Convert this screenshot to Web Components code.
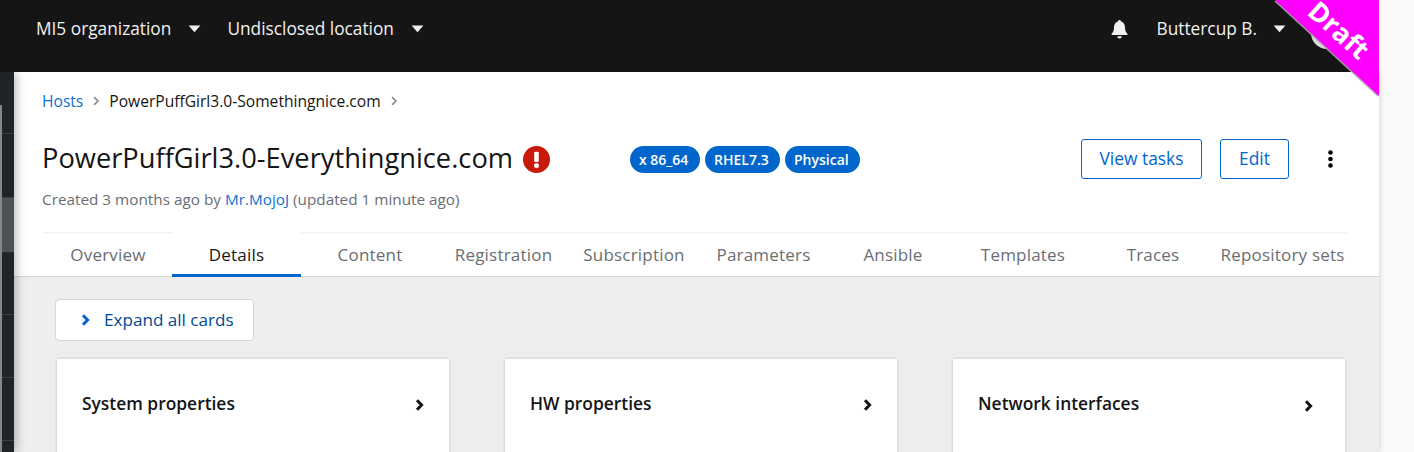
<!DOCTYPE html>
<html>
<head>
<meta charset="utf-8">
<style>
  html, body { margin: 0; height: 100%; overflow: hidden; }
  body { width: 1414px; height: 452px; background: #fafafa; font-family: "Open Sans", "Noto Sans", sans-serif; }
</style>
</head>
<body>
<app-shell>
  <top-bar slot="top"></top-bar>
  <side-rail slot="side"></side-rail>
  <host-page slot="main"></host-page>
</app-shell>
<draft-ribbon>Draft</draft-ribbon>

<script>
const caret = `<svg width="13" height="8" viewBox="0 0 13 8"><path d="M0.6 0.6h11.8L6.500 7.200z" fill="currentColor"/></svg>`;
const angle = `<svg width="8" height="12" viewBox="0 0 8 12"><path d="M1.600 1.200 6.400 6l-4.800 4.800" fill="none" stroke="currentColor" stroke-width="2.200"/></svg>`;
const angleBold = `<svg width="9" height="12" viewBox="0 0 9 12"><path d="M2 1.200 6.600 6 2 10.800" fill="none" stroke="currentColor" stroke-width="3"/></svg>`;

class AppShell extends HTMLElement {
    constructor() {
        super();
        this.attachShadow({mode: 'open'});
        this.shadowRoot.innerHTML = `
            <style>
                :host { display: grid; grid-template-columns: 14px 1365px; grid-template-rows: 72px 380px; width: 1414px; height: 452px; overflow: hidden; }
                ::slotted([slot=top]) { grid-column: 1 / 3; }
            </style>
            <slot name="top"></slot>
            <slot name="side"></slot>
            <slot name="main"></slot>
        `;
    }
}

class TopBar extends HTMLElement {
    constructor() {
        super();
        this.attachShadow({mode: 'open'});
        this.shadowRoot.innerHTML = `
            <style>
                :host { display: flex; align-items: flex-start; height: 72px; background: #151515; color: #f0f0f0; font-size: 17.300px; position: relative; z-index: 2; }
                .item { display: flex; align-items: center; height: 58px; }
                .item span { margin-right: 17px; position: relative; top: -1px; }
                .org { margin-left: 36px; margin-right: 26px; }
                .spacer { flex: 1; }
                .bell { margin-right: 29px; }
                .user span { margin-right: 16px; }
                .avatar { width: 32px; height: 32px; border-radius: 50%; background: #dcdcdc; margin: 17px 36px 0 25px; }
            </style>
            <div class="item org"><span>MI5 organization</span>${caret}</div>
            <div class="item"><span>Undisclosed location</span>${caret}</div>
            <div class="spacer"></div>
            <div class="item bell"><svg width="17" height="19" viewBox="0 0 17 19"><path fill="currentColor" d="M8.500 0a1.500 1.500 0 0 1 1.500 1.600c2.800.7 4 3 4 6 0 3.200.9 4.600 2.300 6 .4.500.2 1.400-.6 1.400H1.300c-.8 0-1-.9-.6-1.400 1.400-1.400 2.300-2.800 2.300-6 0-3 1.200-5.300 4-6A1.500 1.500 0 0 1 8.500 0zM6.200 16.200h4.600a2.300 2.300 0 0 1-4.600 0z"/></svg></div>
            <div class="item user"><span>Buttercup B.</span>${caret}</div>
            <div class="avatar"></div>
        `;
    }
}

class SideRail extends HTMLElement {
    constructor() {
        super();
        this.attachShadow({mode: 'open'});
        this.shadowRoot.innerHTML = `
            <style>
                :host { display: block; height: 380px; background: #212427; position: relative; z-index: 1; box-shadow: 3px 0 10px rgba(0,0,0,.25); }
                .row { box-sizing: border-box; border-bottom: 1px solid #3c3f42; }
                .row.on { background: #4f5255; border-bottom-color: #2b2e31; }
                .thumb { position: absolute; left: 0; top: 33px; bottom: 0; width: 2px; background: #85888b; }
            </style>
            <div class="row" style="height:62px"></div>
            <div class="row" style="height:64px"></div>
            <div class="row on" style="height:55px"></div>
            <div class="row" style="height:62px"></div>
            <div class="row" style="height:63px"></div>
            <div class="row" style="height:63px"></div>
            <div class="thumb"></div>
        `;
    }
}

class HostPage extends HTMLElement {
    constructor() {
        super();
        this.attachShadow({mode: 'open'});
        this.shadowRoot.innerHTML = `
            <style>
                :host { display: block; height: 380px; background: #fff; box-shadow: 0 0 6px rgba(0,0,0,.2); font-size: 16px; color: #151515; }
                .crumbs { display: flex; align-items: center; height: 20px; padding: 19px 0 1px 28px; font-size: 15.600px; }
                .crumbs a { color: #0f6fd0; }
                .crumbs svg { color: #8a8d90; margin: 0 9px; transform: scale(.8); }
                .head { display: flex; align-items: center; height: 42px; margin-top: 26px; padding-left: 28px; }
                h1 { margin: 0 0 3px; font-size: 27.250px; font-weight: 400; line-height: 39px; }
                .alert { flex: none; width: 27px; height: 27px; }
                .titlewrap { display: flex; align-items: center; width: 588px; flex: none; gap: 10px; }
                .badges { display: flex; gap: 5px; width: 451px; flex: none; }
                .actions { display: flex; align-items: center; }
                .kebab { margin-left: 39px; width: 5px; height: 18px; }
                .meta { margin: 9px 0 0 28px; font-size: 15.300px; line-height: 20px; color: #6a6e73; }
                .meta a { color: #0f6fd0; }
                detail-tabs { margin-top: 23px; }
                .body { background: #eeeeee; height: 175px; overflow: hidden; }
                .bar { padding: 22px 0 0 41px; height: 82px; box-sizing: border-box; }
                .cards { display: grid; grid-template-columns: repeat(3, 392px); gap: 56px; padding-left: 43px; }
            </style>
            <div class="crumbs"><a>Hosts</a>${angle}<span>PowerPuffGirl3.0-Somethingnice.com</span>${angle}</div>
            <div class="head">
                <div class="titlewrap">
                    <h1>PowerPuffGirl3.0-Everythingnice.com</h1>
                    <svg class="alert" viewBox="0 0 26 26"><circle cx="13" cy="13" r="13" fill="#c9190b"/><rect x="10.800" y="5.500" width="4.400" height="10" rx="1.200" fill="#fff"/><circle cx="13" cy="19" r="2.400" fill="#fff"/></svg>
                </div>
                <div class="badges">
                    <info-badge style="width:70px">x 86_64</info-badge>
                    <info-badge style="width:75px">RHEL7.3</info-badge>
                    <info-badge style="width:75px">Physical</info-badge>
                </div>
                <div class="actions">
                    <outline-button style="width:121px;margin-right:18px">View tasks</outline-button>
                    <outline-button style="width:69px">Edit</outline-button>
                    <svg class="kebab" viewBox="0 0 5 18"><circle cx="2.500" cy="2.500" r="2.300"/><circle cx="2.500" cy="9" r="2.300"/><circle cx="2.500" cy="15.500" r="2.300"/></svg>
                </div>
            </div>
            <div class="meta">Created 3 months ago by <a>Mr.MojoJ</a> (updated 1 minute ago)</div>
            <detail-tabs></detail-tabs>
            <div class="body">
                <div class="bar"><expand-button>Expand all cards</expand-button></div>
                <div class="cards">
                    <summary-card>System properties</summary-card>
                    <summary-card>HW properties</summary-card>
                    <summary-card style="--arrow-right:32px;--arrow-drop:6px">Network interfaces</summary-card>
                </div>
            </div>
        `;
    }
}

class InfoBadge extends HTMLElement {
    constructor() {
        super();
        this.attachShadow({mode: 'open'});
        this.shadowRoot.innerHTML = `
            <style>
                :host { display: inline-flex; align-items: center; box-sizing: border-box; height: 27px; padding-left: 9px; border-radius: 14px; background: #0066cc; color: #fff; font-size: 14px; font-weight: 600; white-space: nowrap; }
            </style>
            <slot></slot>
        `;
    }
}

class OutlineButton extends HTMLElement {
    constructor() {
        super();
        this.attachShadow({mode: 'open'});
        this.shadowRoot.innerHTML = `
            <style>
                :host { display: inline-flex; align-items: center; justify-content: center; height: 40px; box-sizing: border-box; padding-bottom: 2px; border: 1px solid #0066cc; border-radius: 3px; color: #0066cc; font-size: 17.400px; }
            </style>
            <slot></slot>
        `;
    }
}

class DetailTabs extends HTMLElement {
    constructor() {
        super();
        this.attachShadow({mode: 'open'});
        const tabs = [
            ['Overview', 128], ['Details', 129], ['Content', 138], ['Registration', 129],
            ['Subscription', 132], ['Parameters', 127], ['Ansible', 132], ['Templates', 128],
            ['Traces', 132], ['Repository sets', 127]
        ];
        this.shadowRoot.innerHTML = `
            <style>
                :host { display: block; box-sizing: content-box; border-bottom: 1px solid #d6d6d6; height: 44px; }
                .list { display: flex; height: 44px; margin-left: 30px; width: 1303px; box-sizing: border-box; border-top: 1px solid #f0f0f0; }
                .tab { box-sizing: border-box; height: 43px; display: flex; align-items: center; justify-content: center; color: #6a6e73; font-size: 17px; letter-spacing: .2px; flex: none; white-space: nowrap; }
                .tab.on { color: #151515; border-bottom: 3px solid #0066cc; background: #fff; margin-top: -1px; height: 45px; padding: 3px 0 0; }
            </style>
            <div class="list">
                ${tabs.map(([t, w]) => `<div class="tab${t === 'Details' ? ' on' : ''}" style="width:${w}px">${t}</div>`).join('')}
            </div>
        `;
    }
}

class ExpandButton extends HTMLElement {
    constructor() {
        super();
        this.attachShadow({mode: 'open'});
        this.shadowRoot.innerHTML = `
            <style>
                :host { display: flex; align-items: center; width: 199px; height: 42px; box-sizing: border-box; padding: 0 0 2px 25px; background: #fff; border: 1px solid #d6d6d6; border-radius: 4px; color: #004b95; font-size: 17.100px; }
                svg { color: #0066cc; margin: 2px 14px 0 0; }
            </style>
            ${angleBold}<slot></slot>
        `;
    }
}

class SummaryCard extends HTMLElement {
    constructor() {
        super();
        this.attachShadow({mode: 'open'});
        this.shadowRoot.innerHTML = `
            <style>
                :host { display: block; height: 140px; background: #fff; box-shadow: 0 0 3px rgba(0,0,0,.2); color: #151515; }
                .head { display: flex; align-items: center; justify-content: space-between; height: 88px; box-sizing: border-box; padding: 0 var(--arrow-right, 25px) 0 25px; font-size: 17.400px; font-weight: 600; }
                svg { margin-top: var(--arrow-drop, 4px); }
            </style>
            <div class="head"><slot></slot>${angleBold}</div>
        `;
    }
}

class DraftRibbon extends HTMLElement {
    constructor() {
        super();
        this.attachShadow({mode: 'open'});
        this.shadowRoot.innerHTML = `
            <style>
                :host { position: absolute; top: 0; left: 1254px; width: 125px; height: 97px; overflow: hidden; display: block; pointer-events: none; z-index: 3; }
                .edge { filter: drop-shadow(-1px 1px 0 rgba(170,170,170,.9)); }
                .tri { width: 125px; height: 96px; background: #ff00ff; clip-path: polygon(21px 0, 125px 0, 125px 96px); }
                .txt { position: absolute; left: 50px; top: 11px; color: #fff; font-size: 27px; font-weight: 700; transform: rotate(42deg); }
            </style>
            <div class="edge"><div class="tri"></div></div>
            <div class="txt"><slot></slot></div>
        `;
    }
}

customElements.define('app-shell', AppShell);
customElements.define('top-bar', TopBar);
customElements.define('side-rail', SideRail);
customElements.define('host-page', HostPage);
customElements.define('info-badge', InfoBadge);
customElements.define('outline-button', OutlineButton);
customElements.define('detail-tabs', DetailTabs);
customElements.define('expand-button', ExpandButton);
customElements.define('summary-card', SummaryCard);
customElements.define('draft-ribbon', DraftRibbon);
</script>
</body>
</html>
